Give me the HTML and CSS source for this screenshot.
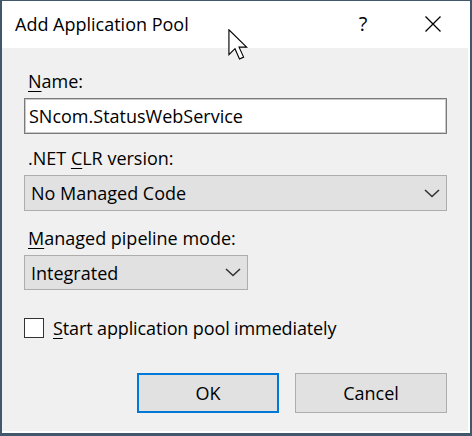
FILE: index.html
```html
<!DOCTYPE html>
<html>
<head>
<meta charset="utf-8">
<link rel="stylesheet" href="styles.css">
</head>
<body>
<div class="window">
  <div class="titlebar">
    <span class="title">Add Application Pool</span>
    <span class="help">?</span>
    <span class="close">
      <svg width="16" height="16" viewBox="0 0 16 16"><path d="M0.5 0.5 L15.5 15.5 M15.5 0.5 L0.5 15.5" stroke="#000" stroke-width="1.3" fill="none"/></svg>
    </span>
  </div>
  <div class="content">
    <div class="label l-name"><u>N</u>ame:</div>
    <div class="textbox">SNcom.StatusWebService</div>
    <div class="label l-clr">.NET <u>C</u>LR version:</div>
    <div class="select wide">
      <span>No Managed Code</span>
      <svg class="chev" width="16" height="9" viewBox="0 0 16 9"><path d="M1 1 L8 7.5 L15 1" stroke="#333" stroke-width="1.6" fill="none"/></svg>
    </div>
    <div class="label l-mode"><u>M</u>anaged pipeline mode:</div>
    <div class="select narrow">
      <span>Integrated</span>
      <svg class="chev" width="16" height="9" viewBox="0 0 16 9"><path d="M1 1 L8 7.5 L15 1" stroke="#333" stroke-width="1.6" fill="none"/></svg>
    </div>
    <div class="check">
      <span class="box"></span>
      <span class="check-text"><u>S</u>tart application pool immediately</span>
    </div>
    <div class="buttons">
      <div class="btn ok">OK</div>
      <div class="btn cancel">Cancel</div>
    </div>
  </div>
  <svg class="cursor" width="20" height="31" viewBox="0 0 13 20.5"><path d="M0.5 0.5 V17 L4.5 13 L7.5 19.8 L10.2 18.6 L7.2 12 H12.2 Z" fill="#fff" stroke="#000" stroke-width="0.75" stroke-linejoin="miter"/></svg>
</div>
</body>
</html>
```

FILE: styles.css
```css
* { box-sizing: border-box; }
html, body { margin: 0; padding: 0; background: #fff; }
body {
  font-family: "Open Sans", "Noto Sans", sans-serif;
  font-size: 18px;
  color: #000;
}
.window {
  position: relative;
  width: 472px;
  height: 436px;
  border-top: 1px solid #41576b;
  border-left: 2px solid #41576b;
  border-right: 2px solid #41576b;
  border-bottom: 3px solid #41576b;
  padding-right: 2px;
  padding-bottom: 2px;
  background: #fff;
  display: flex;
  flex-direction: column;
}
.titlebar {
  height: 47px;
  flex: none;
  display: flex;
  align-items: center;
  padding-left: 13px;
  padding-right: 12px;
  background: #fff;
}
.title {
  flex: 1;
  font-size: 18px;
  line-height: 24px;
  padding-bottom: 1px;
}
.help {
  width: 46px;
  text-align: center;
  margin-right: 24px;
  font-size: 20px;
  line-height: 24px;
  padding-bottom: 1px;
}
.close {
  width: 46px;
  display: flex;
  justify-content: center;
  align-items: center;
  padding-bottom: 1px;
}
.close svg { display: block; }
.content {
  flex: 1;
  background: #f0f0f0;
  padding: 22px 21px 0 22px;
  display: flex;
  flex-direction: column;
}
.label {
  line-height: 22px;
  padding-left: 4px;
}
.label u, .check-text u { text-decoration-thickness: 1px; text-underline-offset: 3px; }
.textbox {
  margin-top: 6px;
  height: 36px;
  background: #fff;
  border: 1px solid #7a7a7a;
  box-shadow: inset 0 0 0 1px #c9c9c9;
  padding-left: 4px;
  display: flex;
  align-items: center;
}
.l-clr { margin-top: 13px; }
.select {
  margin-top: 6px;
  height: 36px;
  background: #e1e1e1;
  border: 1px solid #adadad;
  display: flex;
  align-items: center;
  justify-content: space-between;
  padding-left: 6px;
  padding-right: 6px;
}
.select.narrow { width: 224px; height: 35px; }
.chev { display: block; }
.l-mode { margin-top: 16px; }
.check {
  margin-top: 27px;
  display: flex;
  align-items: center;
  height: 22px;
}
.box {
  width: 20px;
  height: 20px;
  background: #fff;
  border: 1px solid #333;
  margin-left: 0;
  margin-right: 9px;
}
.check-text { line-height: 22px; letter-spacing: -0.12px; }
.buttons {
  margin-top: 34px;
  display: flex;
  justify-content: flex-end;
  gap: 16px;
}
.btn {
  height: 40px;
  background: #e1e1e1;
  border: 1px solid #adadad;
  display: flex;
  align-items: center;
  justify-content: center;
}
.btn.ok { width: 142px; border: 2px solid #0078d7; }
.btn.cancel { width: 152px; }
.cursor {
  position: absolute;
  left: 226px;
  top: 28px;
}
```
